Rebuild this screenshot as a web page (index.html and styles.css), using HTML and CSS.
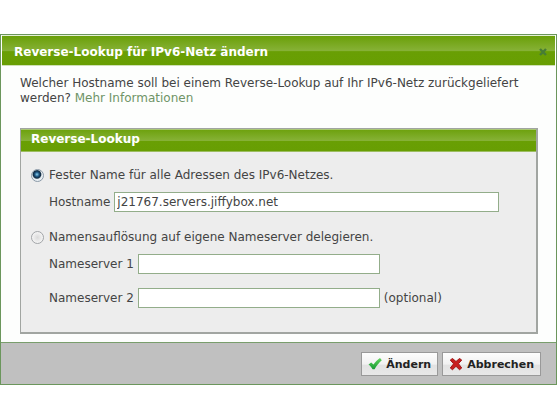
FILE: index.html
```html
<!DOCTYPE html>
<html lang="de">

<head>
    <meta charset="UTF-8">
    <meta name="viewport" content="width=device-width, initial-scale=1.0">
    <title>Reverse-Lookup für IPv6-Netz ändern</title>
    <link rel="stylesheet" href="styles.css">
</head>

<body>
    <form class="dialog">
        <header class="dialog-header">
            <h1>Reverse-Lookup für IPv6-Netz ändern</h1>
            <button type="button" class="close" aria-label="Schließen">
                <svg width="8" height="8" viewBox="0 0 8 8"><path d="M1 1l6 6M7 1l-6 6" stroke="#477d35" stroke-width="2.4"/></svg>
            </button>
        </header>

        <div class="dialog-body">
            <p>Welcher Hostname soll bei einem Reverse-Lookup auf Ihr IPv6-Netz zurückgeliefert werden? <a href="#">Mehr Informationen</a></p>

            <section class="panel">
                <h2>Reverse-Lookup</h2>
                <div class="panel-body">
                    <div class="option">
                        <input type="radio" name="mode" id="fixed" checked>
                        <label for="fixed">Fester Name für alle Adressen des IPv6-Netzes.</label>
                    </div>
                    <div class="field field-host">
                        <label for="hostname">Hostname</label>
                        <input type="text" id="hostname" value="j21767.servers.jiffybox.net">
                    </div>
                    <div class="option">
                        <input type="radio" name="mode" id="delegate">
                        <label for="delegate">Namensauflösung auf eigene Nameserver delegieren.</label>
                    </div>
                    <div class="field field-ns">
                        <label for="ns1">Nameserver 1</label>
                        <input type="text" id="ns1">
                    </div>
                    <div class="field field-ns">
                        <label for="ns2">Nameserver 2</label>
                        <input type="text" id="ns2">
                        <span>(optional)</span>
                    </div>
                </div>
            </section>
        </div>

        <footer class="dialog-footer">
            <button type="submit" class="btn">
                <svg width="14" height="14" viewBox="0 0 14 14">
                    <defs>
                        <linearGradient id="check" x1="0" y1="0" x2="0" y2="1">
                            <stop offset="0" stop-color="#62d45c"/>
                            <stop offset="1" stop-color="#159a32"/>
                        </linearGradient>
                    </defs>
                    <path d="M0.500 7.500L3.200 5.500 5.500 7.600C7.200 5 9.300 2.800 12 1l1.800 2.200C10.900 5.600 8.400 8.800 6.600 12.300H4.600C3.600 10.400 2.300 8.900 0.500 7.500z" fill="url(#check)"/>
                </svg>
                Ändern
            </button>
            <button type="button" class="btn">
                <svg width="14" height="14" viewBox="0 0 14 14">
                    <path d="M3.500 1.500L7 4.500 10.500 1.500 12.700 3 9.500 6.700 12.700 11 10.500 12.700 7 9.300 3.500 12.700 1.300 11 4.600 6.800 1.300 3z" fill="#c81f1f" stroke="#9f1616" stroke-width="1" stroke-linejoin="round"/>
                </svg>
                Abbrechen
            </button>
        </footer>
    </form>
</body>

</html>
```
FILE: styles.css
```css
* {
    box-sizing: border-box;
}

body {
    margin: 0;
    padding: 34px 0;
    background: #fff;
    color: #444;
    font: 12px/15px Verdana, "DejaVu Sans", sans-serif;
}

h1, h2, p {
    margin: 0;
}

input, button {
    font: inherit;
    color: inherit;
}

.dialog {
    background: #fdfefd;
    border: 1px solid #6b965c;
}

.dialog-header {
    display: flex;
    align-items: center;
    justify-content: space-between;
    height: 31px;
    margin: 0 1px;
    padding: 3px 8px 0 12px;
    border-top: 1px solid #e4efd5;
    border-bottom: 1px solid #cfe0b5;
    background: linear-gradient(#6a9f08, #86b136 50%, #699f04 54%, #689e03);
}

h1, h2 {
    color: #fff;
    font-size: 12px;
    font-weight: bold;
}

.close {
    display: flex;
    padding: 0;
    border: 0;
    background: none;
    cursor: pointer;
}

.dialog-body {
    padding: 10px 18px 8px 19px;
}

.dialog-body a {
    display: inline-block;
    color: #6f9467;
    text-decoration: none;
}

.panel {
    margin-top: 22px;
    border: 2px solid #a1a5a1;
    border-width: 1px 2px 2px 1px;
    background: #ededed;
}

.panel h2 {
    padding: 2px 10px 4px;
    border-top: 1px solid #a9c873;
    border-bottom: 1px solid #9cbd61;
    background: linear-gradient(#6ea20f, #86b136 50%, #699f04 54%, #689e03);
}

.panel-body {
    padding: 16px 10px 24px;
}

.option {
    display: flex;
    align-items: center;
    gap: 5px;
}

.option input {
    appearance: none;
    width: 13px;
    height: 13px;
    margin: 0;
    border: 1px solid #a2a5a8;
    border-radius: 50%;
    background: radial-gradient(circle, #dadada, #f4f4f4 70%);
}

.option input:checked {
    border-color: #8b9aa8;
    background: radial-gradient(circle at 45% 40%, #8ad0ee 0, #1d5480 25%, #10293f 42%, #e8eef2 55%);
}

.field {
    display: flex;
    align-items: center;
    gap: 4px;
    padding-left: 18px;
}

.field input {
    height: 20px;
    padding: 0 2px;
    border: 1px solid #93ad8a;
    background: #fff;
}

.field-host {
    margin: 9px 0 18px;
}

.field-host input {
    width: 385px;
}

.field-ns {
    margin-top: 9px;
}

.field-ns input {
    width: 242px;
}

.field-ns + .field-ns {
    margin-top: 14px;
}

.dialog-footer {
    display: flex;
    justify-content: flex-end;
    gap: 4px;
    padding: 9px 15px 8px;
    border-top: 1px solid #799e6c;
    background: #c0c0c0;
}

.btn {
    display: flex;
    align-items: center;
    gap: 4px;
    height: 24px;
    padding: 0 6px;
    border: 1px solid #999;
    background: linear-gradient(#fdfdfd, #f1f1f1 50%, #e2e2e2 56%, #e8e8e8);
    color: #222;
    font-size: 11px;
    font-weight: bold;
    cursor: pointer;
}
```
